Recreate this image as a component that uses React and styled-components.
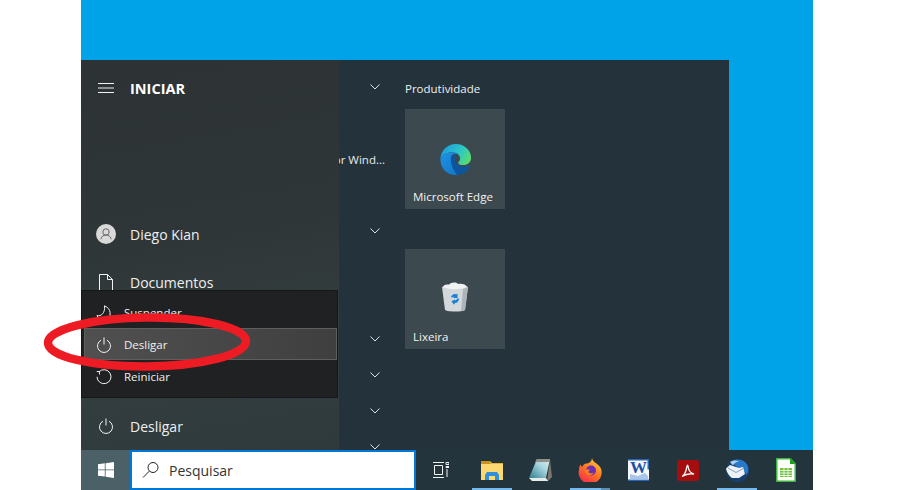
import React from 'react'
import styled, { createGlobalStyle } from 'styled-components'

const GlobalStyle = createGlobalStyle`
  html, body {
    margin: 0;
    padding: 0;
    background: #fff;
    font-family: "Open Sans", "Noto Sans", sans-serif;
  }
`

const chevronRows = [
  { chevron: true },
  {},
  { label: 'Store for Wind...' },
  {},
  { chevron: true },
  {},
  {},
  { chevron: true },
  { chevron: true },
  { chevron: true },
  { chevron: true },
]

const ChevronIcon = () => (
  <ChevronBox>
    <svg width="10" height="6" viewBox="0 0 10 6" fill="none" stroke="#dfe3e4" strokeWidth="1">
      <path d="M.5.5 5 5 9.5.5" />
    </svg>
  </ChevronBox>
)

const MenuIcon = () => (
  <svg width="16" height="10" viewBox="0 0 16 10" stroke="#f2f2f2" strokeWidth="1">
    <path d="M0 .5h16M0 5h16M0 9.5h16" />
  </svg>
)

const UserIcon = () => (
  <svg width="20" height="20" viewBox="0 0 20 20">
    <circle cx="10" cy="10" r="10" fill="#d9d9d9" />
    <circle cx="10" cy="8" r="3.2" fill="none" stroke="#666" strokeWidth="1" />
    <path d="M4.800 15.200c.6-2.800 2.600-4.200 5.200-4.200s4.600 1.400 5.200 4.200" fill="none" stroke="#666" strokeWidth="1" />
  </svg>
)

const DocIcon = () => (
  <svg width="14" height="17" viewBox="0 0 14 17" fill="none" stroke="#f2f2f2" strokeWidth="1">
    <path d="M.5.5h8l5 5v11H.5zM8.500.5v5h5" />
  </svg>
)

const PowerIcon = () => (
  <svg width="16" height="16" viewBox="0 0 16 16" fill="none" stroke="#f2f2f2" strokeWidth="1">
    <path d="M5 3.200a6.500 6.500 0 1 0 6 0M8 .5v7" />
  </svg>
)

const MoonIcon = () => (
  <svg width="16" height="16" viewBox="0 0 16 16" fill="none" stroke="#f2f2f2" strokeWidth="1">
    <path d="M8.500.8c3.500 1.500 5.500 4 5.500 6.700a6.500 6.500 0 0 1-13 3c3.800 1.300 8.500-2.500 7.500-9.700z" />
  </svg>
)

const RestartIcon = () => (
  <svg width="16" height="16" viewBox="0 0 16 16" fill="none" stroke="#f2f2f2" strokeWidth="1">
    <path d="M3 2.800a7 7 0 1 1-2 5M.8 2.500l2.400 0 .4 3" />
  </svg>
)

const WindowsIcon = () => (
  <svg width="16" height="16" viewBox="0 0 16 16" fill="#fff">
    <path d="M0 2.300 6.800 1.300v6.200H0zM7.600 1.200 16 0v7.500H7.600zM0 8.300h6.800v6.300L0 13.700zM7.600 8.300H16V16l-8.400-1.200z" />
  </svg>
)

const SearchIcon = () => (
  <svg width="17" height="16" viewBox="0 0 17 16" fill="none" stroke="#222" strokeWidth="1">
    <circle cx="11" cy="5.500" r="5" />
    <path d="M7.300 9.200 1 15.500" />
  </svg>
)

const TaskViewIcon = () => (
  <svg width="16" height="16" viewBox="0 0 16 16" fill="none" stroke="#f2f2f2" strokeWidth="1">
    <path d="M0 .5h11M0 15.500h11M1.500 3.500h8v9h-8zM14 7v8" />
    <path d="M13 .5h3v2h-3zM13 4.500h3v1h-3z" />
  </svg>
)

const ExplorerIcon = () => (
  <svg width="22" height="19" viewBox="0 0 22 19">
    <path d="M0 0h9l2 2h11v17H0z" fill="#e2b23a" />
    <path d="M0 3h22v16H0z" fill="#fbd872" />
    <path d="M0 0h9v3H0z" fill="#c8921e" />
    <path d="M4 19v-5l2-3h10l2 3v5h-4v-4H8v4z" fill="#2f8fd8" />
  </svg>
)

const NotepadIcon = () => (
  <svg width="23" height="24" viewBox="0 0 23 24">
    <defs>
      <linearGradient id="pad" x1="0" y1="1" x2="1" y2="0">
        <stop offset="0" stopColor="#2f7f92" />
        <stop offset="0.6" stopColor="#a8d6de" />
        <stop offset="1" stopColor="#dceff1" />
      </linearGradient>
    </defs>
    <path d="M8 1h13l-4 19H0z" fill="url(#pad)" />
    <path d="M8 1h13l-.8 3H6z" fill="#8f9088" />
    <path d="M21 2l2 17-5 5 .8-6z" fill="#7c776a" />
    <path d="M0 20h17l2 3H3z" fill="#e9eaea" />
  </svg>
)

const FirefoxIcon = () => (
  <svg width="24" height="24" viewBox="0 0 24 24">
    <defs>
      <linearGradient id="fx" x1="0.8" y1="0" x2="0.2" y2="1">
        <stop offset="0" stopColor="#ffd23f" />
        <stop offset="0.45" stopColor="#ff7a1f" />
        <stop offset="1" stopColor="#f5274f" />
      </linearGradient>
    </defs>
    <path d="M14 0c.5 3 2.500 4 4.500 5.500C22 8 23.500 10.500 23.500 13A11.500 11 0 1 1 1 12c0-2 .5-4 1.500-5.500.5 1.200 1 1.800 2 2.300C5 6.500 7 5 9.500 5.500 12 4.500 14 3 14 0z" fill="url(#fx)" />
    <circle cx="13" cy="12.500" r="5" fill="#6b2fb5" />
    <path d="M7 12c2-1 3.500-1 5-.2-1 1-1.500 1.600-1.500 2.500 1 1.200 3.500 1.400 5 .2-1 2.200-3 3-5 2.500C8.500 16.500 7 14.500 7 12z" fill="#f58220" />
  </svg>
)

const WordIcon = () => (
  <svg width="22" height="22" viewBox="0 0 22 22">
    <path d="M0 0h21v22H0z" fill="#f5f7fb" />
    <path d="M0 0h21v1.500H0zM19.500 1.500H21v9h-1.500zM0 20.500h21V22H0z" fill="#2b65b5" />
    <path d="M2 15l8 2 7-3 3 3v3.500H2z" fill="#a8c6ec" />
    <text x="2" y="14" fontFamily="Liberation Serif, serif" fontWeight="700" fontSize="17" fill="#1d4fa3">W</text>
  </svg>
)

const PdfIcon = () => (
  <svg width="22" height="21" viewBox="0 0 22 21">
    <rect width="22" height="21" rx="3" fill="#a50e0e" />
    <path d="M5 16.500c2-1 4-5 5-10 .3-2 1-1.500 1.200.5.300 3 2.300 6 5.800 7-3-.5-8 0-12 2.500z" fill="none" stroke="#f5f5f5" strokeWidth="1.300" />
  </svg>
)

const ThunderbirdIcon = () => (
  <svg width="24" height="23" viewBox="0 0 24 23">
    <circle cx="12.500" cy="11.500" r="11.500" fill="#17406f" />
    <path d="M6 2.500C10 -.500 17 -.500 21 4c3 3.500 3 9 .5 12-1-3-4-5.500-8-6.500z" fill="#2a78c8" />
    <path d="M5 3c3-2 6-2 9-.5-3 .5-5 2-6 4z" fill="#a9cdea" />
    <path d="M1 9.500 5 6l9 3 4-1 2 7-6 4-7 0C4 17 1.500 13 1 9.500z" fill="#eef2f7" />
    <path d="M3 9l8 4.500L19 9" fill="none" stroke="#8aa3c2" strokeWidth="1" />
  </svg>
)

const CalcIcon = () => (
  <svg width="20" height="24" viewBox="0 0 20 24">
    <path d="M.8.8h13.500l4.900 4.900v17.500H.8z" fill="#fff" stroke="#3db83d" strokeWidth="1.500" />
    <path d="M14 0l6 6h-6z" fill="#1fa01f" />
    <path d="M4 10h12v9H4z" fill="#6fc23c" />
    <path d="M4 12.500h12M4 15h12M4 17.500h12M8 10v9M12 10v9" stroke="#fff" strokeWidth="0.800" />
  </svg>
)

const EdgeIcon = () => (
  <svg width="33" height="33" viewBox="0 0 36 36">
    <defs>
      <linearGradient id="edgeTop" x1="0" y1="0.3" x2="1" y2="0.7">
        <stop offset="0" stopColor="#1b9de2" />
        <stop offset="0.6" stopColor="#2fc9c4" />
        <stop offset="1" stopColor="#5cdd68" />
      </linearGradient>
      <linearGradient id="edgeBody" x1="0" y1="0" x2="0.8" y2="1">
        <stop offset="0" stopColor="#1f93e4" />
        <stop offset="1" stopColor="#1477c9" />
      </linearGradient>
    </defs>
    <path d="M1.500 16C3 7 10 1 18 1c10 0 17 7 17 15 0 5-4 8-8.500 8-3.500 0-5.500-1-5.500-2.500 0-1 2-1.500 2-4.500 0-4-4-7-8.500-7C8 10 3.500 12.500 1.500 16z" fill="url(#edgeTop)" />
    <path d="M1.500 16C3.500 12.500 8 10 14.500 10c3 0 5.500 1 7 2.500-4-1.500-8-.5-8.500 3-.5 5 2 11 7 19.300-.7.100-1.300.200-2 .200C8 35 1 27 1.500 16z" fill="url(#edgeBody)" />
    <path d="M13 17c.3-3 3.500-5 7-4.500-2.500 1.500-3.500 4-2.500 7 1.500 4 5.500 6.500 10 6.500 2.500 0 5-.8 7-2.500C33 30 27.500 34.500 20 34.800 15.500 30 13 24 13 17z" fill="#0d569f" />
  </svg>
)

const BinIcon = () => (
  <svg width="26" height="35" viewBox="0 0 26 35">
    <path d="M0 5c3-2 7-3 13-3s10 1 13 3l-3 23c-2 2-17 2-20 0z" fill="#d3d8db" />
    <path d="M1 5c1-3 5-3 6-2 2-3 7-3 9-1 3-1 8 0 9 3-6 3-18 3-24 0z" fill="#eff1f2" />
    <path d="M21 7l-2 22c2 0 3-.500 4-1l3-23z" fill="#aeb5b9" />
    <path d="M9 15c1-2.500 3.500-3.500 5-2.600l1.500-.9v4.500h-4.500l1-1c-.8-.400-1.500 0-1.700.8zM17 16.500c0 2.500-1.700 4.500-4 4.500l-1 1.800-2.600-3.500 3.600-1.800v1c.8 0 1.800-1 2.200-2z" fill="#1b7fd6" />
  </svg>
)

const RingIcon = () => (
  <svg width="214" height="66" viewBox="0 0 214 66" fill="none">
    <ellipse cx="107" cy="33" rx="99" ry="24.500" stroke="#ed1c24" strokeWidth="8.500" transform="rotate(-0.500 107 33)" />
  </svg>
)

const taskbarApps = [
  { id: 'explorer', icon: <ExplorerIcon />, state: 'open' },
  { id: 'notepad', icon: <NotepadIcon /> },
  { id: 'firefox', icon: <FirefoxIcon />, state: 'many' },
  { id: 'word', icon: <WordIcon /> },
  { id: 'pdf', icon: <PdfIcon /> },
  { id: 'mail', icon: <ThunderbirdIcon />, state: 'open' },
  { id: 'calc', icon: <CalcIcon /> },
]

export default function App() {
  return (
    <>
      <GlobalStyle />
      <Page>
        <Desktop>
          <Workspace>
            <StartMenu>
              <Rail>
                <RailRow>
                  <RailIcon><MenuIcon /></RailIcon>
                  <RailTitle>INICIAR</RailTitle>
                </RailRow>
                <RailBottom>
                  <RailRow>
                    <RailIcon><UserIcon /></RailIcon>
                    <RailLabel>Diego Kian</RailLabel>
                  </RailRow>
                  <RailRow>
                    <RailIcon><DocIcon /></RailIcon>
                    <RailLabel>Documentos</RailLabel>
                  </RailRow>
                  <RailGap />
                  <RailRow>
                    <RailIcon><PowerIcon /></RailIcon>
                    <RailLabel>Desligar</RailLabel>
                  </RailRow>
                </RailBottom>
              </Rail>
              <AppList>
                {chevronRows.map((row, index) => (
                  <AppRow key={index}>
                    {row.chevron && <ChevronIcon />}
                    {row.label && <AppLabel>{row.label}</AppLabel>}
                  </AppRow>
                ))}
              </AppList>
              <Tiles>
                <GroupTitle>Produtividade</GroupTitle>
                <TileStack>
                  <Tile>
                    <TileIcon><EdgeIcon /></TileIcon>
                    <TileLabel>Microsoft Edge</TileLabel>
                  </Tile>
                  <Tile>
                    <TileIcon><BinIcon /></TileIcon>
                    <TileLabel>Lixeira</TileLabel>
                  </Tile>
                </TileStack>
              </Tiles>
              <PowerMenu>
                <PowerItem>
                  <MoonIcon />
                  <PowerLabel>Suspender</PowerLabel>
                </PowerItem>
                <PowerItem $active>
                  <PowerIcon />
                  <PowerLabel>Desligar</PowerLabel>
                </PowerItem>
                <PowerItem>
                  <RestartIcon />
                  <PowerLabel>Reiniciar</PowerLabel>
                </PowerItem>
              </PowerMenu>
              <Ring><RingIcon /></Ring>
            </StartMenu>
          </Workspace>
          <Taskbar>
            <StartButton><WindowsIcon /></StartButton>
            <SearchBox>
              <SearchIcon />
              <SearchText>Pesquisar</SearchText>
            </SearchBox>
            <TaskView><TaskViewIcon /></TaskView>
            {taskbarApps.map((app) => (
              <TaskButton key={app.id} $state={app.state}>{app.icon}</TaskButton>
            ))}
          </Taskbar>
        </Desktop>
      </Page>
    </>
  )
}

const Page = styled.div`
  width: 924px;
  height: 490px;
  padding-left: 81px;
  box-sizing: border-box;
  overflow: hidden;
`

const Desktop = styled.div`
  width: 732px;
  height: 490px;
  display: flex;
  flex-direction: column;
  background: #00a2e8;
`

const Workspace = styled.div`
  flex: 1;
  min-height: 0;
  padding-top: 60px;
`

const StartMenu = styled.div`
  position: relative;
  width: 648px;
  height: 390px;
  display: flex;
  background: #24333b;
`

const Rail = styled.div`
  width: 258px;
  flex: none;
  z-index: 1;
  display: flex;
  flex-direction: column;
  justify-content: space-between;
  padding-top: 4px;
  box-sizing: border-box;
  background: linear-gradient(170deg, #2d3335 0%, #2f3638 45%, #343e3f 72%, #2f3a3d 100%);
`

const RailRow = styled.div`
  height: 48px;
  display: flex;
  align-items: center;
`

const RailIcon = styled.div`
  width: 49px;
  flex: none;
  display: flex;
  justify-content: center;
`

const RailTitle = styled.span`
  color: #fff;
  font-size: 14.5px;
  font-weight: 700;
`

const RailLabel = styled.span`
  color: #eef0f0;
  font-size: 14px;
`

const RailBottom = styled.div`
  display: flex;
  flex-direction: column;
`

const RailGap = styled.div`
  height: 96px;
`

const AppList = styled.div`
  width: 66px;
  height: 100%;
  flex: none;
  box-sizing: border-box;
  padding-top: 9px;
  overflow: hidden;
`

const AppRow = styled.div`
  height: 36px;
  display: flex;
  align-items: center;
  justify-content: flex-end;
  padding-right: 20px;
  white-space: nowrap;
`

const ChevronBox = styled.div`
  display: flex;
  margin-right: 5px;
`

const AppLabel = styled.span`
  color: #e8ebec;
  font-size: 11.5px;
`

const Tiles = styled.div`
  display: flex;
  flex-direction: column;
`

const GroupTitle = styled.div`
  height: 49px;
  box-sizing: border-box;
  padding-top: 20px;
  color: #eef0f0;
  font-size: 11.5px;
  line-height: 17px;
`

const TileStack = styled.div`
  display: flex;
  flex-direction: column;
  gap: 40px;
`

const Tile = styled.div`
  width: 100px;
  height: 100px;
  display: flex;
  flex-direction: column;
  background: #3c494f;
`

const TileIcon = styled.div`
  flex: 1;
  display: flex;
  align-items: center;
  justify-content: center;
  padding-top: 21px;
`

const TileLabel = styled.div`
  color: #f2f2f2;
  font-size: 11.5px;
  line-height: 16px;
  padding: 0 8px 4px;
`

const PowerMenu = styled.div`
  position: absolute;
  z-index: 2;
  left: 0;
  top: 230px;
  width: 257px;
  height: 108px;
  box-sizing: border-box;
  padding: 5px 0 5px 2px;
  display: flex;
  flex-direction: column;
  background: #1f2122;
  border: 1px solid #151617;
`

const PowerItem = styled.div`
  height: 32px;
  flex: none;
  display: flex;
  align-items: center;
  gap: 12px;
  padding: 1px 0 0 11px;
  box-sizing: border-box;
  background: ${(props) => (props.$active ? 'linear-gradient(90deg, #505050, #3f3f3f)' : 'transparent')};
  border: 1px solid ${(props) => (props.$active ? '#5e5f5f' : 'transparent')};
`

const PowerLabel = styled.span`
  color: #f0f0f0;
  font-size: 11.5px;
`

const Ring = styled.div`
  position: absolute;
  z-index: 3;
  left: -41px;
  top: 249px;
  display: flex;
`

const Taskbar = styled.div`
  height: 40px;
  flex: none;
  display: flex;
  background: #24343c;
`

const StartButton = styled.div`
  width: 49px;
  flex: none;
  display: flex;
  align-items: center;
  justify-content: center;
  background: #4b6067;
`

const SearchBox = styled.div`
  width: 286px;
  flex: none;
  box-sizing: border-box;
  display: flex;
  align-items: center;
  gap: 10px;
  padding-left: 10px;
  background: #fff;
  border: 2px solid #0078d7;
`

const SearchText = styled.span`
  color: #333;
  font-size: 14px;
`

const TaskView = styled.div`
  width: 51px;
  flex: none;
  box-sizing: border-box;
  padding-right: 2px;
  display: flex;
  align-items: center;
  justify-content: center;
`

const TaskButton = styled.div`
  position: relative;
  width: 49px;
  flex: none;
  display: flex;
  align-items: center;
  justify-content: center;

  &::after {
    content: '';
    position: absolute;
    left: 5px;
    bottom: 0;
    width: 40px;
    height: 2px;
    background: ${(props) => {
      if (props.$state === 'many') return 'linear-gradient(90deg, #76b9ed 31px, #5d8fb3 31px)'
      return props.$state ? '#76b9ed' : 'transparent'
    }};
  }
`
